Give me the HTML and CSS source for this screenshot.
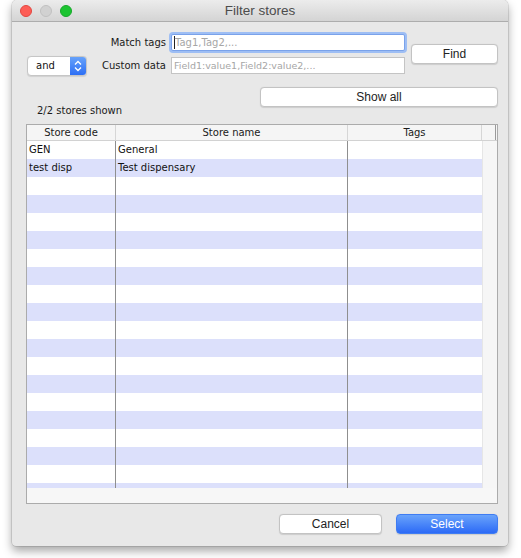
FILE: index.html
```html
<!DOCTYPE html>
<html>
<head>
<meta charset="utf-8">
<link rel="stylesheet" href="styles.css">
</head>
<body>
<div class="window">
  <div class="titlebar">
    <div class="lights">
      <span class="light red"></span>
      <span class="light gray"></span>
      <span class="light green"></span>
    </div>
    <div class="title">Filter stores</div>
  </div>
  <div class="content">
    <div class="filters">
      <div class="label l1">Match tags</div>
      <div class="input focused i1"><span class="caret"></span><span class="ph ph-tags">Tag1,Tag2,...</span></div>
      <div class="popup">
        <span class="popup-text">and</span>
        <span class="stepper"><svg width="16" height="20" viewBox="0 0 16 20"><path d="M5 8.5 L8 5.5 L11 8.5" fill="none" stroke="#fff" stroke-width="1.3"/><path d="M5 11.5 L8 14.5 L11 11.5" fill="none" stroke="#fff" stroke-width="1.3"/></svg></span>
      </div>
      <div class="label l2">Custom data</div>
      <div class="input i2"><span class="ph">Field1:value1,Field2:value2,...</span></div>
      <div class="btn find">Find</div>
    </div>
    <div class="showall-row"><div class="btn showall">Show all</div></div>
    <div class="status">2/2 stores shown</div>
    <div class="table">
      <div class="thead">
        <div class="th c1">Store code</div>
        <div class="th c2">Store name</div>
        <div class="th c3">Tags</div>
        <div class="th c4"></div>
      </div>
      <div class="tmain">
        <div class="tbody">
          <div class="tr"><div class="td c1">GEN</div><div class="td c2">General</div><div class="td c3"></div></div>
          <div class="tr alt"><div class="td c1">test disp</div><div class="td c2">Test dispensary</div><div class="td c3"></div></div>
          <div class="tr"><div class="td c1"></div><div class="td c2"></div><div class="td c3"></div></div>
          <div class="tr alt"><div class="td c1"></div><div class="td c2"></div><div class="td c3"></div></div>
          <div class="tr"><div class="td c1"></div><div class="td c2"></div><div class="td c3"></div></div>
          <div class="tr alt"><div class="td c1"></div><div class="td c2"></div><div class="td c3"></div></div>
          <div class="tr"><div class="td c1"></div><div class="td c2"></div><div class="td c3"></div></div>
          <div class="tr alt"><div class="td c1"></div><div class="td c2"></div><div class="td c3"></div></div>
          <div class="tr"><div class="td c1"></div><div class="td c2"></div><div class="td c3"></div></div>
          <div class="tr alt"><div class="td c1"></div><div class="td c2"></div><div class="td c3"></div></div>
          <div class="tr"><div class="td c1"></div><div class="td c2"></div><div class="td c3"></div></div>
          <div class="tr alt"><div class="td c1"></div><div class="td c2"></div><div class="td c3"></div></div>
          <div class="tr"><div class="td c1"></div><div class="td c2"></div><div class="td c3"></div></div>
          <div class="tr alt"><div class="td c1"></div><div class="td c2"></div><div class="td c3"></div></div>
          <div class="tr"><div class="td c1"></div><div class="td c2"></div><div class="td c3"></div></div>
          <div class="tr alt"><div class="td c1"></div><div class="td c2"></div><div class="td c3"></div></div>
          <div class="tr"><div class="td c1"></div><div class="td c2"></div><div class="td c3"></div></div>
          <div class="tr alt"><div class="td c1"></div><div class="td c2"></div><div class="td c3"></div></div>
          <div class="tr"><div class="td c1"></div><div class="td c2"></div><div class="td c3"></div></div>
          <div class="tr alt"><div class="td c1"></div><div class="td c2"></div><div class="td c3"></div></div>
        </div>
        <div class="vscroll"></div>
      </div>
      <div class="hscroll"></div>
    </div>
    <div class="actions">
      <div class="btn cancel">Cancel</div>
      <div class="btn select">Select</div>
    </div>
  </div>
</div>
</body>
</html>
```

FILE: styles.css
```css
* { box-sizing: border-box; }
html, body { margin: 0; padding: 0; background: #ffffff; }
body {
  width: 521px;
  height: 558px;
  overflow: hidden;
  font-family: "DejaVu Sans", sans-serif;
  font-size: 10px;
  color: #1a1a1a;
}
.window {
  margin-left: 12px;
  width: 496px;
  height: 546px;
  background: #e8e8e8;
  border-radius: 5px 5px 4px 4px;
  box-shadow: 0 5px 10px rgba(0,0,0,0.35), 0 0 0 0.5px rgba(0,0,0,0.18);
  overflow: hidden;
}
.titlebar {
  height: 22px;
  background: linear-gradient(#ececec, #d4d4d4);
  border-bottom: 1px solid #adadad;
  display: flex;
  align-items: center;
  padding-left: 8px;
}
.lights { display: flex; gap: 8px; width: 52px; }
.light {
  width: 12px; height: 12px; border-radius: 50%;
  display: block;
}
.red { background: #fd5d56; border: 0.5px solid #e2463f; }
.gray { background: #d1d1d1; border: 0.5px solid #c0c0c0; }
.green { background: #1cc431; border: 0.5px solid #17a82a; }
.title {
  flex: 1;
  text-align: center;
  padding-right: 60px;
  font-family: "Liberation Sans", Arial, sans-serif;
  font-size: 13.5px;
  color: #4c4c4c;
}
.content { padding: 12px 10px 0 15px; }
.filters {
  display: grid;
  grid-template-columns: 60px 84px 234px 93px;
  grid-template-rows: 17px 17px;
  column-gap: 0;
  row-gap: 6px;
}
.filters .find { margin-left: 6px; }
.label {
  text-align: right;
  padding-right: 5px;
  line-height: 17px;
  color: #1a1a1a;
}
.l1 { grid-column: 2; grid-row: 1; }
.l2 { grid-column: 2; grid-row: 2; }
.i1 { grid-column: 3; grid-row: 1; }
.i2 { grid-column: 3; grid-row: 2; }
.popup { grid-column: 1; grid-row: 2; align-self: center; }
.find { grid-column: 4; grid-row: 1 / span 2; align-self: center; }
.input {
  background: #fff;
  border: 1px solid #c4c4c4;
  height: 17px;
  display: flex;
  align-items: center;
  padding-left: 2px;
  overflow: hidden;
  white-space: nowrap;
}
.input.focused {
  border: 1px solid #7aa2ea;
  border-radius: 2px;
  box-shadow: 0 0 0 2px #9ebef4;
  padding-left: 2px;
}
.caret { width: 1px; height: 13px; background: #222; margin-right: 0; }
.ph { font-size: 9.5px; color: #a6a6a6; }
.ph-tags { font-size: 10px; }
.popup {
  height: 20px;
  width: 60px;
  display: flex;
  background: #fff;
  border: 1px solid #c6c6c6;
  border-radius: 4px;
  overflow: hidden;
  box-shadow: 0 0.5px 1px rgba(0,0,0,0.1);
}
.popup-text { flex: 1; padding-left: 8px; line-height: 18px; font-size: 10px; color: #111; }
.stepper {
  width: 16px;
  background: linear-gradient(#67a2fa, #2d6ff5);
  display: flex;
}
.stepper svg { display: block; margin-top: -1px; }
.btn {
  height: 20px;
  background: #fff;
  border: 1px solid #c3c3c3;
  border-radius: 4px;
  text-align: center;
  font-family: "Liberation Sans", Arial, sans-serif;
  font-size: 12px;
  line-height: 18px;
  color: #222;
  box-shadow: 0 0.5px 1px rgba(0,0,0,0.12);
}
.showall-row { display: flex; justify-content: flex-end; margin-top: 13px; }
.showall { width: 238px; }
.status { margin-top: -2px; padding-left: 10px; line-height: 12px; height: 12px; color: #1a1a1a; }
.table {
  margin-top: 7px;
  margin-left: -1px;
  width: 472px;
  height: 380px;
  border: 1px solid #ababab;
  background: #fff;
  display: flex;
  flex-direction: column;
}
.thead {
  height: 16px;
  display: flex;
  background: #f5f5f5;
  border-bottom: 1px solid #d2d2d2;
  flex: none;
}
.th {
  text-align: center;
  line-height: 15px;
  color: #1a1a1a;
  border-right: 1px solid #d6d6d6;
}
.c1 { width: 89px; }
.c2 { width: 232px; }
.c3 { width: 134px; }
.th.c4 { flex: 1; border-right: 1px solid #9a9a9a; margin-right: 1px; }
.tmain { display: flex; height: 347px; flex: none; overflow: hidden; }
.tbody { width: 455px; }
.tr { display: flex; height: 18px; background: #fff; }
.tr.alt { background: #dce0fb; }
.td { line-height: 18px; padding-left: 2px; color: #111; white-space: nowrap; }
.td.c1 { border-right: 1px solid #8f8f8f; }
.td.c2 { border-right: 1px solid #8f8f8f; }
.vscroll { flex: 1; background: #f6f6f6; border-left: 1px solid #e6e6e6; }
.hscroll { flex: 1; background: #f7f7f7; }
.actions {
  display: flex;
  justify-content: flex-end;
  gap: 14px;
  margin-top: 10px;
}
.cancel { width: 103px; }
.select {
  width: 102px;
  background: linear-gradient(#69a3fb, #2c6af6);
  border: 1px solid #3f7cf2;
  color: #fff;
}
```
